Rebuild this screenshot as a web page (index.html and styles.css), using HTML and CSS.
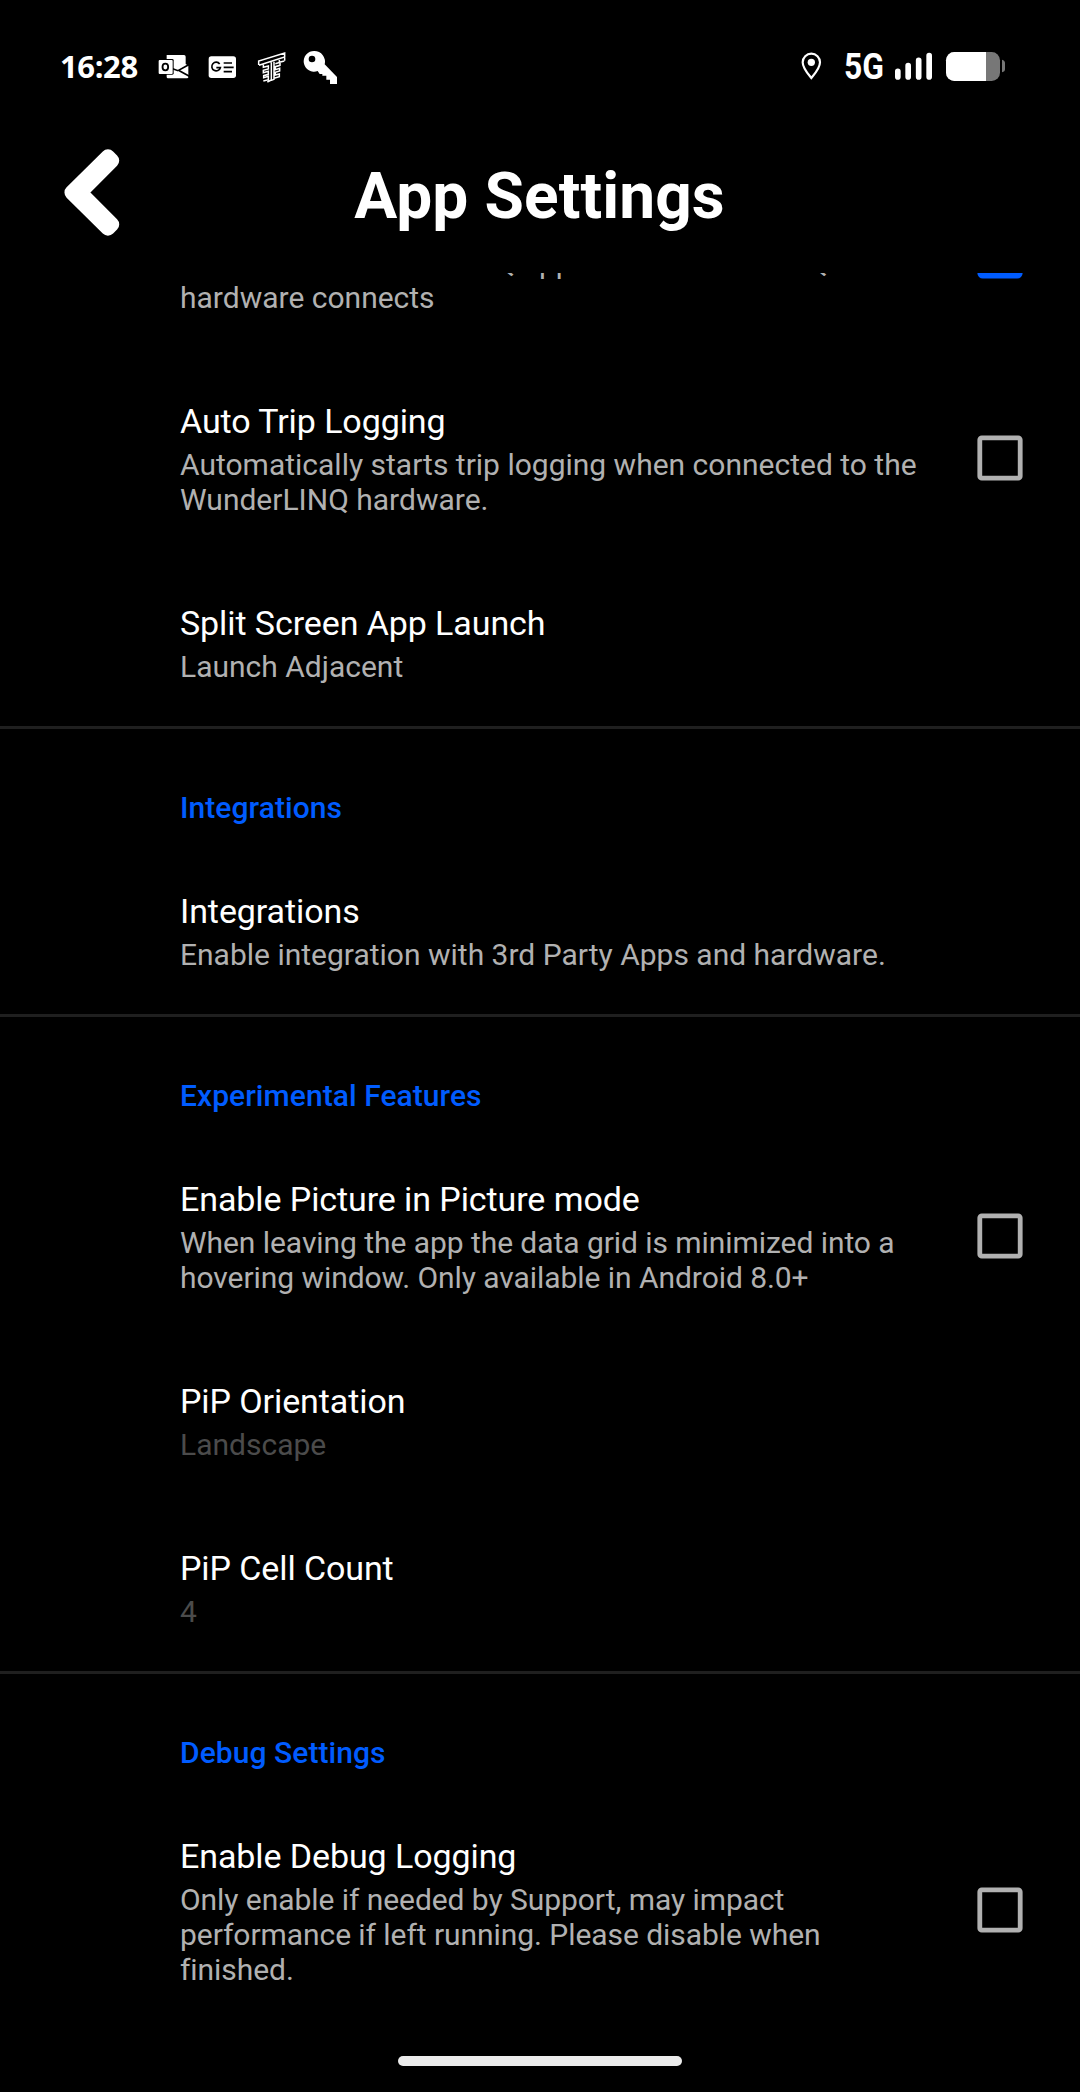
FILE: index.html
```html
<!DOCTYPE html>
<html lang="en">
<head>
<meta charset="utf-8">
<title>App Settings</title>
<link rel="stylesheet" href="styles.css">
</head>
<body>
<div class="screen">
  <div class="status">
    <span class="clock">16:28</span>
    <div class="notifications">
      <svg class="icon" viewBox="315 30 108 108">
        <path fill="#fff" d="M350 45H402Q407 45 407 50V72L415 77V112Q415 115 411 115H354Q350 115 350 111Z"/>
        <path fill="none" stroke="#000" stroke-width="5" d="M368 86L384 92L416 74M388 92L418 109"/>
        <rect x="322" y="57" width="49" height="47" rx="4"/>
        <rect x="326" y="60" width="42" height="42" rx="3" fill="#fff"/>
        <ellipse cx="346" cy="81" rx="8.500" ry="10" fill="none" stroke="#000" stroke-width="5.500"/>
      </svg>
      <svg class="icon" viewBox="462 30 108 108">
        <rect x="476" y="49" width="82" height="65" rx="8" fill="#fff"/>
        <path fill="none" stroke="#000" stroke-width="5" d="M509 72A13 13 0 1 0 511 83H499M521 69H546M521 82H551M521 95H546"/>
      </svg>
      <svg class="icon" viewBox="609 30 108 108">
        <path fill="none" stroke="#fff" stroke-width="4.500" d="M626 75V63L704 39V51L627 76M640 74V82L655 78V87L640 91V98L655 94V103L641 107V113L655 109V119L640 123M664 67V120L652 126M672 65V118L664 121M688 60V67L703 63M704 52V62M676 71L690 67V76L676 80V89L689 85V93L676 97V105L688 102V110L672 115"/>
      </svg>
      <svg class="icon" viewBox="756 30 108 108">
        <path fill="#fff" fill-rule="evenodd" d="M793 33A32 32 0 0 1 824 73L861 111V132H840V119H829V107H817V102H809L803 93A31 31 0 1 1 793 33ZM786 47A10 10 0 1 0 786 67A10 10 0 1 0 786 47Z"/>
      </svg>
    </div>
    <div class="system">
      <svg class="pin" viewBox="57 30 72 108">
        <path fill="none" stroke="#fff" stroke-width="6.500" d="M94 114C84 102 68 85 68 67A26 26 0 0 1 120 67C120 85 104 102 94 114Z"/>
        <circle cx="94" cy="67" r="11" fill="#fff"/>
      </svg>
      <span class="network"><span class="network-label">5G</span></span>
      <svg class="signal" viewBox="342 30 117 108">
        <path stroke="#fff" stroke-width="17" stroke-linecap="round" d="M353.500 94V111M384.500 77V111M416 61V111M447.500 47V111"/>
      </svg>
      <svg class="battery" viewBox="495 30 183 108">
        <rect x="498" y="36" width="162" height="87" rx="25" fill="#777"/>
        <path fill="#fff" d="M618 36H523A25 25 0 0 0 498 61V98A25 25 0 0 0 523 123H618Z"/>
        <path fill="#777" d="M666 59Q675 61 675 69V87Q675 95 666 97Z"/>
      </svg>
    </div>
  </div>

  <header class="appbar">
    <svg class="back" viewBox="73 57 166 262">
      <path fill="#fff" stroke="#fff" stroke-width="44" stroke-linejoin="round" d="M95 188L204 80L216 92L120 188L216 284L204 296Z"/>
    </svg>
    <h1 class="title">App Settings</h1>
  </header>

  <main class="list">
    <section class="group scrolled">
      <div class="row">
        <div class="text"><div class="name">Auto Launch</div><div class="summary">Auto launch WunderLINQ app when WunderLINQ hardware connects</div></div>
        <svg class="check checked" viewBox="0 0 46 46"><rect x="2.800" y="2.800" width="40.400" height="40.400" rx="3"/></svg>
      </div>
      <div class="row">
        <div class="text"><div class="name">Auto Trip Logging</div><div class="summary">Automatically starts trip logging when connected to the WunderLINQ hardware.</div></div>
        <svg class="check" viewBox="0 0 46 46"><rect x="2.800" y="2.800" width="40.400" height="40.400" rx="2"/></svg>
      </div>
      <div class="row">
        <div class="text"><div class="name">Split Screen App Launch</div><div class="summary">Launch Adjacent</div></div>
      </div>
    </section>
    <section class="group">
      <h2 class="heading">Integrations</h2>
      <div class="row">
        <div class="text"><div class="name">Integrations</div><div class="summary">Enable integration with 3rd Party Apps and hardware.</div></div>
      </div>
    </section>
    <section class="group">
      <h2 class="heading">Experimental Features</h2>
      <div class="row">
        <div class="text"><div class="name">Enable Picture in Picture mode</div><div class="summary snug">When leaving the app the data grid is minimized into a hovering window. Only available in Android 8.0+</div></div>
        <svg class="check" viewBox="0 0 46 46"><rect x="2.800" y="2.800" width="40.400" height="40.400" rx="2"/></svg>
      </div>
      <div class="row">
        <div class="text"><div class="name">PiP Orientation</div><div class="summary disabled">Landscape</div></div>
      </div>
      <div class="row">
        <div class="text"><div class="name">PiP Cell Count</div><div class="summary disabled">4</div></div>
      </div>
    </section>
    <section class="group">
      <h2 class="heading">Debug Settings</h2>
      <div class="row tall">
        <div class="text"><div class="name">Enable Debug Logging</div><div class="summary snug">Only enable if needed by Support, may impact performance if left running. Please disable when finished.</div></div>
        <svg class="check" viewBox="0 0 46 46"><rect x="2.800" y="2.800" width="40.400" height="40.400" rx="2"/></svg>
      </div>
    </section>
  </main>
  <div class="gesture"><span class="handle"></span></div>
</div>
</body>
</html>
```
FILE: styles.css
```css
* { box-sizing: border-box; }
body { margin: 0; background: #000; color: #fff; font-family: Roboto, sans-serif; }
svg { display: block; flex: none; }
.screen { width: 1080px; height: 2092px; display: flex; flex-direction: column; overflow: hidden; }

.status { height: 136px; padding: 50px 74px 0 60px; display: flex; align-items: flex-start; flex: none; }
.clock { width: 95px; height: 36px; font: 700 31px/33px "Open Sans", sans-serif; letter-spacing: -0.4px; white-space: nowrap; }
.notifications { display: flex; gap: 13px; }
.icon { width: 36px; height: 36px; }
.system { display: flex; margin-left: auto; }
.pin { width: 24px; height: 36px; }
.network { width: 71px; height: 36px; padding-left: 21px; font: 700 37px/34px Roboto, sans-serif; white-space: nowrap; }
.network-label { display: inline-block; transform: scaleX(0.86); transform-origin: left; }
.signal { width: 39px; height: 36px; }
.battery { width: 61px; height: 36px; margin-left: 12px; }

.appbar { height: 137px; padding: 13px 64px 0; display: flex; align-items: flex-start; flex: none; }
.back { width: 56px; height: 87px; }
.title { flex: 1; margin: 10px 57px 0 0; text-align: center; font-size: 64px; line-height: 75px; font-weight: 700; letter-spacing: 0.1px; }

.list { height: 1759px; overflow: hidden; flex: none; }
.group { border-top: 3px solid #1f1f1f; }
.group.scrolled { border-top: 0; margin-top: -118px; }
.heading { margin: 0; height: 118px; padding: 61px 0 0 180px; font-size: 30px; line-height: 35px; font-weight: 500; letter-spacing: 0.06px; color: #005cff; }
.row { display: flex; align-items: center; padding: 0 57px 0 180px; }
.text { width: 740px; padding: 44px 0 42px; }
.name { font-size: 34px; line-height: 40px; margin-bottom: 6px; letter-spacing: -0.09px; }
.summary { font-size: 30px; line-height: 35px; color: #b1b1b1; }
.summary.snug { letter-spacing: -0.06px; }
.summary.disabled { color: #4b4b4b; }
.check { width: 46px; height: 46px; margin-left: auto; fill: none; stroke: #b1b1b1; stroke-width: 4.8; }
.check.checked { fill: #005cff; stroke: #005cff; }
.tall .check { margin-bottom: 1px; }

.gesture { height: 60px; padding-top: 24px; display: flex; justify-content: center; flex: none; }
.handle { width: 284px; height: 10px; border-radius: 5px; background: #ebebeb; }
```
